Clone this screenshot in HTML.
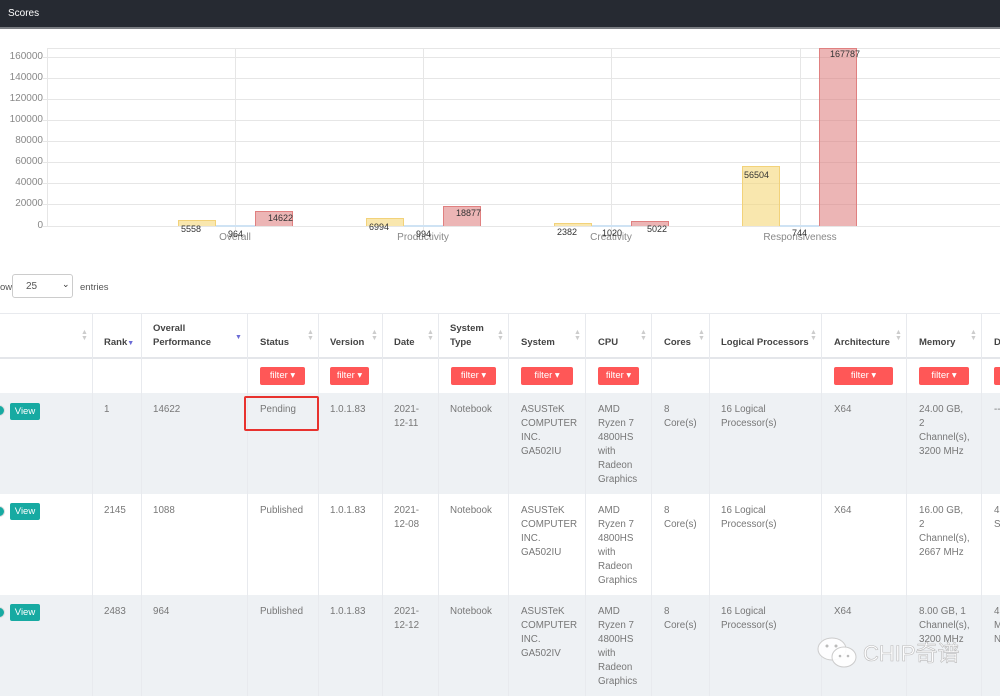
<!DOCTYPE html>
<html><head><meta charset="utf-8"><style>
*{margin:0;padding:0;box-sizing:border-box}
body{width:1000px;height:696px;overflow:hidden;background:#fff;font-family:"Liberation Sans","Noto Sans CJK SC",sans-serif;position:relative}
.a{position:absolute}
.hdr{left:0;top:0;width:1000px;height:29px;background:#262a32;border-bottom:2px solid #7a7d82}
.hdr span{position:absolute;left:8px;top:8px;color:#fff;font-size:10px}
.yl{position:absolute;right:957px;font-size:10px;color:#888;text-align:right}
.gh{position:absolute;left:43px;width:957px;height:1px;background:#e6e6e6}
.gv{position:absolute;top:48px;width:1px;height:182px;background:#e6e6e6}
.y{position:absolute;background:rgba(245,215,120,.6);border:1px solid #f2d27a;border-bottom:none}
.r{position:absolute;background:rgba(220,120,120,.55);border:1px solid #e08080;border-bottom:none}
.b{position:absolute;height:2px;background:#cfe3f4}
.v{position:absolute;font-size:9px;color:#333}
.cat{position:absolute;top:232px;font-size:10px;color:#888;text-align:center;width:120px}
.vl{position:absolute;top:313px;width:1px;height:383px;background:#e8eaee}
.th{position:absolute;font-size:9.5px;font-weight:bold;color:#444;line-height:14px;white-space:nowrap}
.sort{position:absolute;top:330px;width:6px;font-size:7px;color:#ccc;line-height:6px}
.f{position:absolute;top:367px;height:18px;background:#ff5757;color:#fff;font-size:9.5px;border-radius:2px;text-align:center;line-height:18px}
.row{position:absolute;left:0;width:1000px}
.td{position:absolute;font-size:9.8px;color:#777;line-height:14px;white-space:nowrap}
.vb{position:absolute;left:10px;width:30px;height:17px;background:#17aaa2;color:#fff;font-size:9.5px;line-height:17px;text-align:center;border-radius:2px}
.ci{position:absolute;left:-6px;width:11px;height:11px;border-radius:50%;background:#17aaa2;border:1px solid #ddd}
</style></head><body>
<div class="a hdr"><span>Scores</span></div>

<div class="a" style="left:47px;top:48px;width:953px;height:1px;background:#e6e6e6"></div>
<div class="a" style="left:47px;top:48px;width:1px;height:179px;background:#e6e6e6"></div>
<div class="gh" style="top:57px"></div><div class="gh" style="top:78px"></div><div class="gh" style="top:99px"></div><div class="gh" style="top:120px"></div><div class="gh" style="top:141px"></div><div class="gh" style="top:162px"></div><div class="gh" style="top:183px"></div><div class="gh" style="top:204px"></div><div class="gh" style="top:226px"></div>
<div class="yl" style="top:51px">160000</div><div class="yl" style="top:72px">140000</div><div class="yl" style="top:93px">120000</div><div class="yl" style="top:114px">100000</div><div class="yl" style="top:135px">80000</div><div class="yl" style="top:156px">60000</div><div class="yl" style="top:177px">40000</div><div class="yl" style="top:198px">20000</div><div class="yl" style="top:220px">0</div>
<div class="gv" style="left:235px"></div><div class="gv" style="left:423px"></div><div class="gv" style="left:611px"></div><div class="gv" style="left:800px"></div>

<div class="y" style="left:178px;top:220px;width:38px;height:6px"></div><div class="b" style="left:216px;top:225px;width:39px"></div><div class="r" style="left:255px;top:211px;width:38px;height:15px"></div>
<div class="y" style="left:366px;top:218px;width:38px;height:8px"></div><div class="b" style="left:404px;top:225px;width:39px"></div><div class="r" style="left:443px;top:206px;width:38px;height:20px"></div>
<div class="y" style="left:554px;top:223px;width:38px;height:3px"></div><div class="b" style="left:592px;top:225px;width:39px"></div><div class="r" style="left:631px;top:221px;width:38px;height:5px"></div>
<div class="y" style="left:742px;top:166px;width:38px;height:60px"></div><div class="b" style="left:780px;top:225px;width:39px"></div><div class="r" style="left:819px;top:48px;width:38px;height:178px"></div>

<div class="cat" style="left:175px">Overall</div><div class="cat" style="left:363px">Productivity</div><div class="cat" style="left:551px">Creativity</div><div class="cat" style="left:740px">Responsiveness</div>
<div class="v" style="left:181px;top:224px">5558</div><div class="v" style="left:228px;top:229px">964</div><div class="v" style="left:268px;top:213px">14622</div>
<div class="v" style="left:369px;top:222px">6994</div><div class="v" style="left:416px;top:229px">994</div><div class="v" style="left:456px;top:208px">18877</div>
<div class="v" style="left:557px;top:227px">2382</div><div class="v" style="left:602px;top:228px">1020</div><div class="v" style="left:647px;top:224px">5022</div>
<div class="v" style="left:744px;top:170px">56504</div><div class="v" style="left:792px;top:228px">744</div><div class="v" style="left:830px;top:49px">167787</div>

<div class="a" style="left:0;top:282px;font-size:9.5px;color:#555">ow</div>
<div class="a" style="left:12px;top:274px;width:61px;height:24px;border:1px solid #ccc;border-radius:3px;background:#fff"><span style="position:absolute;left:13px;top:6px;font-size:10px;color:#555">25</span><span style="position:absolute;left:49px;top:4px;font-size:9px;color:#333">&#8964;</span></div>
<div class="a" style="left:80px;top:282px;font-size:9.5px;color:#555">entries</div>

<div class="a" style="left:0;top:313px;width:1000px;height:1px;background:#e8eaee"></div>
<div class="a" style="left:0;top:357px;width:1000px;height:2px;background:#e4e6ea"></div>
<div class="row" style="top:393px;height:101px;background:#eef1f4"></div>
<div class="row" style="top:494px;height:101px;background:#fff"></div>
<div class="row" style="top:595px;height:101px;background:#eef1f4"></div>
<div class="vl" style="left:92px"></div><div class="vl" style="left:141px"></div><div class="vl" style="left:247px"></div><div class="vl" style="left:318px"></div><div class="vl" style="left:382px"></div><div class="vl" style="left:438px"></div><div class="vl" style="left:508px"></div><div class="vl" style="left:585px"></div><div class="vl" style="left:651px"></div><div class="vl" style="left:709px"></div><div class="vl" style="left:821px"></div><div class="vl" style="left:906px"></div><div class="vl" style="left:981px"></div>

<div class="th" style="left:104px;top:336px">Rank<span style="color:#6b6bd6;font-size:7px">▼</span></div>
<div class="th" style="left:153px;top:322px">Overall<br>Performance</div><div class="a" style="left:235px;top:334px;font-size:7px;color:#6b6bd6">▼</div>
<div class="th" style="left:260px;top:336px">Status</div>
<div class="th" style="left:330px;top:336px">Version</div>
<div class="th" style="left:394px;top:336px">Date</div>
<div class="th" style="left:450px;top:322px">System<br>Type</div>
<div class="th" style="left:521px;top:336px">System</div>
<div class="th" style="left:598px;top:336px">CPU</div>
<div class="th" style="left:664px;top:336px">Cores</div>
<div class="th" style="left:721px;top:336px">Logical Processors</div>
<div class="th" style="left:834px;top:336px">Architecture</div>
<div class="th" style="left:919px;top:336px">Memory</div>
<div class="th" style="left:994px;top:336px">D</div>
<div class="sort" style="left:81px">▲<br>▼</div><div class="sort" style="left:307px">▲<br>▼</div><div class="sort" style="left:371px">▲<br>▼</div><div class="sort" style="left:427px">▲<br>▼</div><div class="sort" style="left:497px">▲<br>▼</div><div class="sort" style="left:574px">▲<br>▼</div><div class="sort" style="left:640px">▲<br>▼</div><div class="sort" style="left:698px">▲<br>▼</div><div class="sort" style="left:810px">▲<br>▼</div><div class="sort" style="left:895px">▲<br>▼</div><div class="sort" style="left:970px">▲<br>▼</div>

<div class="f" style="left:260px;width:45px">filter ▾</div>
<div class="f" style="left:330px;width:39px">filter ▾</div>
<div class="f" style="left:451px;width:45px">filter ▾</div>
<div class="f" style="left:521px;width:52px">filter ▾</div>
<div class="f" style="left:598px;width:41px">filter ▾</div>
<div class="f" style="left:834px;width:59px">filter ▾</div>
<div class="f" style="left:919px;width:50px">filter ▾</div>
<div class="f" style="left:994px;width:10px"></div>

<div class="ci" style="top:405px"></div><div class="vb" style="top:403px">View</div>
<div class="td" style="left:104px;top:403px">1</div>
<div class="td" style="left:153px;top:403px">14622</div>
<div class="td" style="left:260px;top:403px">Pending</div>
<div class="a" style="left:244px;top:396px;width:75px;height:35px;border:2px solid #e8322e;border-radius:2px"></div>
<div class="td" style="left:330px;top:403px">1.0.1.83</div>
<div class="td" style="left:394px;top:403px">2021-<br>12-11</div>
<div class="td" style="left:450px;top:403px">Notebook</div>
<div class="td" style="left:521px;top:403px">ASUSTeK<br>COMPUTER<br>INC.<br>GA502IU</div>
<div class="td" style="left:598px;top:403px">AMD<br>Ryzen 7<br>4800HS<br>with<br>Radeon<br>Graphics</div>
<div class="td" style="left:664px;top:403px">8<br>Core(s)</div>
<div class="td" style="left:721px;top:403px">16 Logical<br>Processor(s)</div>
<div class="td" style="left:834px;top:403px">X64</div>
<div class="td" style="left:919px;top:403px">24.00 GB,<br>2<br>Channel(s),<br>3200 MHz</div>
<div class="td" style="left:994px;top:403px">--</div>

<div class="ci" style="top:506px"></div><div class="vb" style="top:503px">View</div>
<div class="td" style="left:104px;top:504px">2145</div>
<div class="td" style="left:153px;top:504px">1088</div>
<div class="td" style="left:260px;top:504px">Published</div>
<div class="td" style="left:330px;top:504px">1.0.1.83</div>
<div class="td" style="left:394px;top:504px">2021-<br>12-08</div>
<div class="td" style="left:450px;top:504px">Notebook</div>
<div class="td" style="left:521px;top:504px">ASUSTeK<br>COMPUTER<br>INC.<br>GA502IU</div>
<div class="td" style="left:598px;top:504px">AMD<br>Ryzen 7<br>4800HS<br>with<br>Radeon<br>Graphics</div>
<div class="td" style="left:664px;top:504px">8<br>Core(s)</div>
<div class="td" style="left:721px;top:504px">16 Logical<br>Processor(s)</div>
<div class="td" style="left:834px;top:504px">X64</div>
<div class="td" style="left:919px;top:504px">16.00 GB,<br>2<br>Channel(s),<br>2667 MHz</div>
<div class="td" style="left:994px;top:504px">4<br>S</div>

<div class="ci" style="top:607px"></div><div class="vb" style="top:604px">View</div>
<div class="td" style="left:104px;top:605px">2483</div>
<div class="td" style="left:153px;top:605px">964</div>
<div class="td" style="left:260px;top:605px">Published</div>
<div class="td" style="left:330px;top:605px">1.0.1.83</div>
<div class="td" style="left:394px;top:605px">2021-<br>12-12</div>
<div class="td" style="left:450px;top:605px">Notebook</div>
<div class="td" style="left:521px;top:605px">ASUSTeK<br>COMPUTER<br>INC.<br>GA502IV</div>
<div class="td" style="left:598px;top:605px">AMD<br>Ryzen 7<br>4800HS<br>with<br>Radeon<br>Graphics</div>
<div class="td" style="left:664px;top:605px">8<br>Core(s)</div>
<div class="td" style="left:721px;top:605px">16 Logical<br>Processor(s)</div>
<div class="td" style="left:834px;top:605px">X64</div>
<div class="td" style="left:919px;top:605px">8.00 GB, 1<br>Channel(s),<br>3200 MHz</div>
<div class="td" style="left:994px;top:605px">4<br>M<br>N</div>

<svg class="a" style="left:816px;top:636px" width="44" height="34" viewBox="0 0 44 34"><ellipse cx="16" cy="13" rx="14" ry="11" fill="#fff" fill-opacity=".85" stroke="#ccc"/><ellipse cx="28" cy="21" rx="12" ry="10" fill="#fff" fill-opacity=".9" stroke="#ccc"/><circle cx="11" cy="10" r="1.5" fill="#bbb"/><circle cx="20" cy="10" r="1.5" fill="#bbb"/><circle cx="24" cy="20" r="1.3" fill="#bbb"/><circle cx="32" cy="20" r="1.3" fill="#bbb"/></svg>
<div class="a" style="left:863px;top:636px;font-size:22px;color:rgba(255,255,255,.85);-webkit-text-stroke:0.6px #bbb;font-family:'Liberation Sans','Noto Sans CJK SC',sans-serif">CHIP奇谱</div>
</body></html>
